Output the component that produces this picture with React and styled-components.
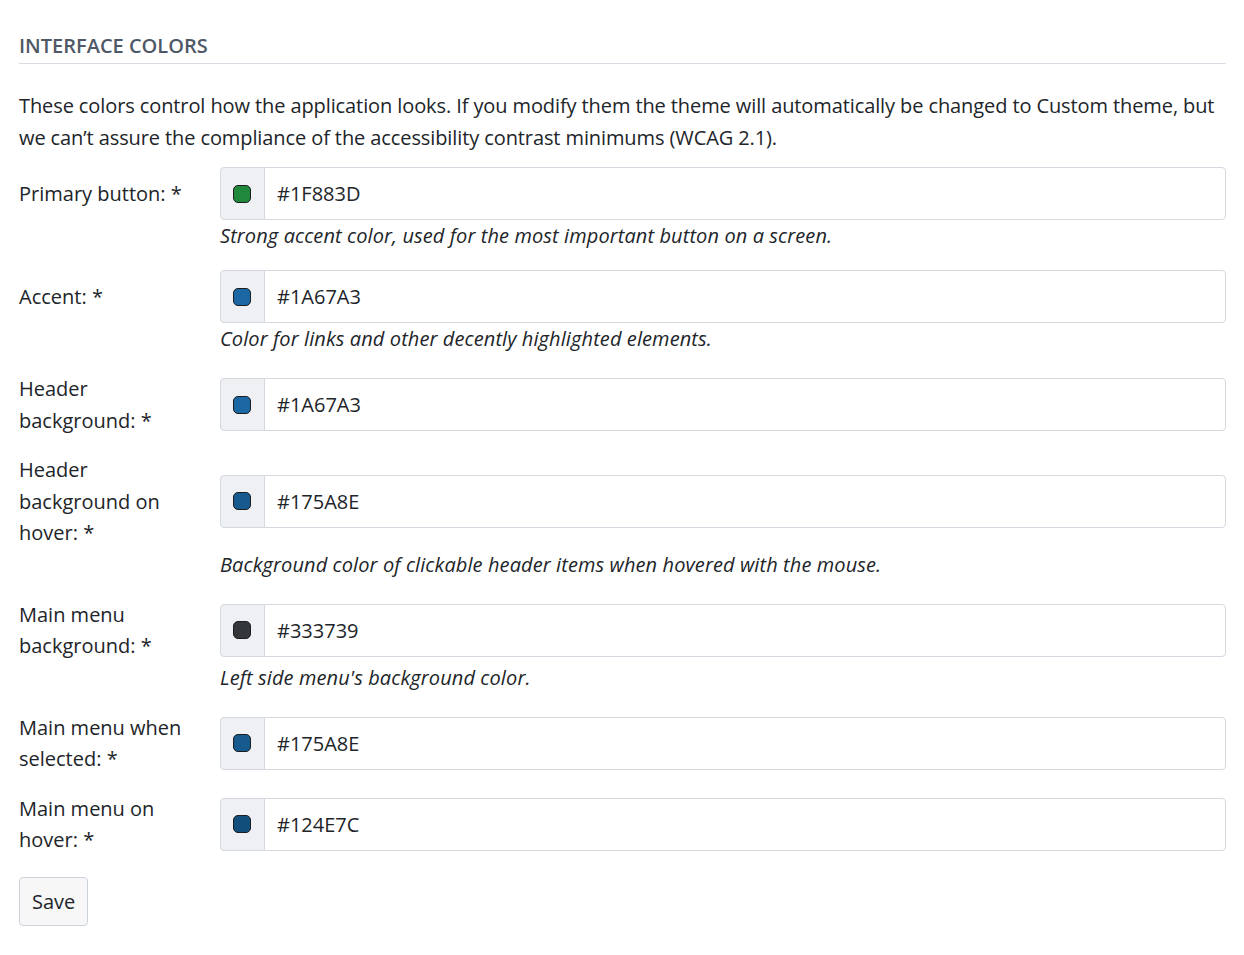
import React from 'react';
import styled, { createGlobalStyle } from 'styled-components';

const GlobalStyle = createGlobalStyle`
  body {
    margin: 0;
    background: #fff;
    color: #212529;
    font-family: "Open Sans", "Noto Sans", sans-serif;
  }
`;

const Page = styled.div`
  padding: 32px 18px 30px 19px;
`;

const Heading = styled.h2`
  margin: 0 0 26px;
  padding-bottom: 3px;
  border-bottom: 1px solid #d8dde3;
  font-size: 20px;
  font-weight: 600;
  color: #4f5966;
  line-height: 28px;
`;

const Intro = styled.p`
  margin: 0 0 13px;
  font-size: 20px;
  line-height: 32px;
  letter-spacing: -0.1px;
`;

const Row = styled.div`
  display: grid;
  grid-template-columns: 201px 1fr;
  margin-bottom: 18px;
`;

const Label = styled.label`
  grid-row: 1;
  grid-column: 1;
  align-self: center;
  font-size: 20px;
  line-height: 31.5px;
  padding-right: 16px;
`;

const InputGroup = styled.div`
  grid-row: 1;
  grid-column: 2;
  align-self: center;
  display: flex;
  height: 53px;
`;

const Addon = styled.div`
  width: 43px;
  flex: none;
  display: flex;
  align-items: center;
  justify-content: center;
  background: #eef0f3;
  border: 1px solid #d3d9df;
  border-radius: 4px 0 0 4px;
`;

const Swatch = styled.span`
  width: 16px;
  height: 16px;
  margin-left: -2px;
  border: 1px solid #1b1d1f;
  border-radius: 5px;
  background: ${p => p.$color};
`;

const Input = styled.input`
  flex: 1;
  min-width: 0;
  margin-left: -1px;
  border: 1px solid #d3d9df;
  border-radius: 0 4px 4px 0;
  padding: 0 12px;
  font: inherit;
  font-size: 20px;
  color: #212529;
  outline: none;
`;

const Help = styled.div`
  grid-row: 2;
  grid-column: 2;
  font-style: italic;
  font-size: 20px;
  line-height: 32px;
  letter-spacing: 0.1px;
`;

const SaveButton = styled.button`
  margin-top: 3px;
  height: 49px;
  padding: 0 12px;
  background: #f7f7f8;
  border: 1px solid #ccd3da;
  border-radius: 4px;
  font: inherit;
  font-size: 20px;
  color: #212529;
`;

const fields = [
  { label: 'Primary button: *', value: '#1F883D', help: 'Strong accent color, used for the most important button on a screen.' },
  { label: 'Accent: *', value: '#1A67A3', help: 'Color for links and other decently highlighted elements.' },
  { label: 'Header background: *', value: '#1A67A3' },
  { label: 'Header background on hover: *', value: '#175A8E', help: 'Background color of clickable header items when hovered with the mouse.' },
  { label: 'Main menu background: *', value: '#333739', help: "Left side menu's background color." },
  { label: 'Main menu when selected: *', value: '#175A8E' },
  { label: 'Main menu on hover: *', value: '#124E7C' },
];

export default function App() {
  return (
    <Page>
      <GlobalStyle />
      <Heading>INTERFACE COLORS</Heading>
      <Intro>
        These colors control how the application looks. If you modify them the theme will automatically be changed to Custom theme, but
        we can’t assure the compliance of the accessibility contrast minimums (WCAG 2.1).
      </Intro>
      {fields.map(f => (
        <Row key={f.label}>
          <Label>{f.label}</Label>
          <InputGroup>
            <Addon><Swatch $color={f.value} /></Addon>
            <Input defaultValue={f.value} />
          </InputGroup>
          {f.help && <Help>{f.help}</Help>}
        </Row>
      ))}
      <SaveButton>Save</SaveButton>
    </Page>
  );
}
